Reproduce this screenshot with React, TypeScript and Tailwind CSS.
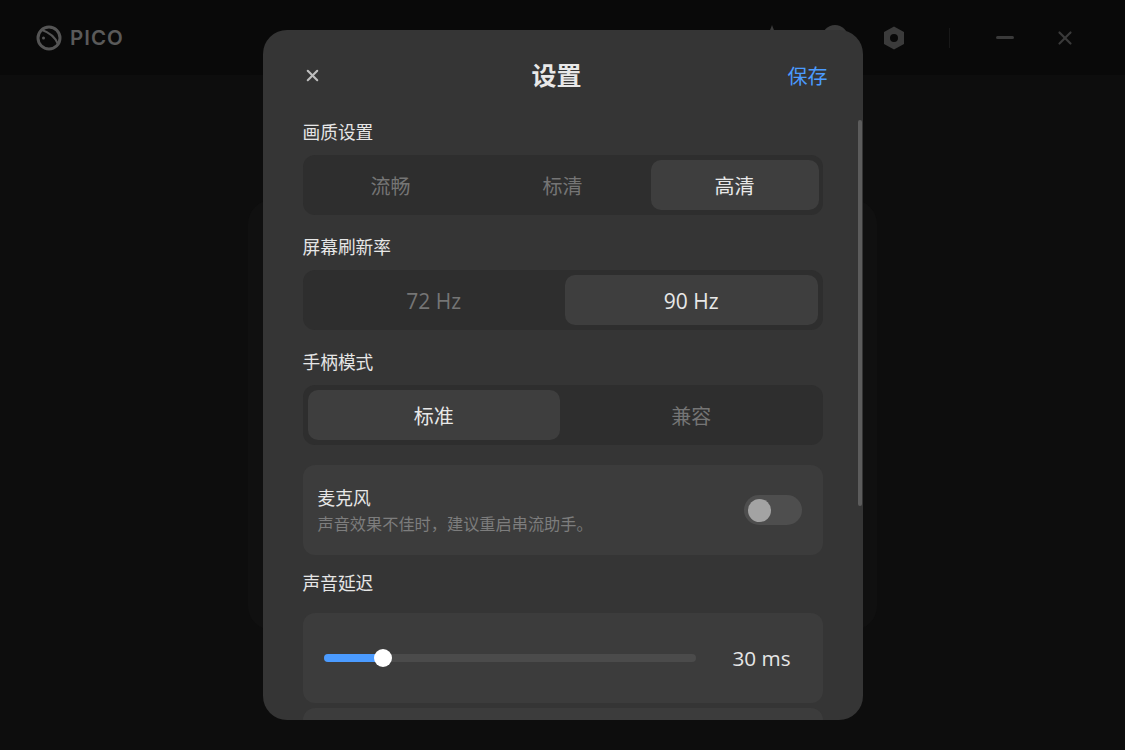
import { X } from "lucide-react";

const font = "font-['Open_Sans','Noto_Sans_CJK_SC',sans-serif]";

function Label({ text, className = "" }: { text: string; className?: string }) {
  return (
    <div className={`h-[26px] text-[17.7px] leading-[26px] text-[#e6e6e6] ${className}`}>
      {text}
    </div>
  );
}

function Segmented({
  items,
  active,
  itemClass,
  boxClass,
}: {
  items: string[];
  active: number;
  itemClass: string;
  boxClass: string;
}) {
  return (
    <div className={`mt-[10px] flex h-[60px] rounded-xl bg-[#2e2e2e] py-[5px] ${boxClass}`}>
      {items.map((item, i) => (
        <div
          key={item}
          className={`flex h-[50px] items-center justify-center rounded-[10px] leading-[52px] ${itemClass} ${
            i === active ? "bg-[#3e3e3e] text-[#e8e8e8]" : "text-[#757575]"
          }`}
        >
          {item}
        </div>
      ))}
    </div>
  );
}

function Header() {
  return (
    <header className="flex h-[75px] items-center bg-[#090909] pl-[36px]">
      <svg width="26" height="26" viewBox="0 0 26 26" fill="none">
        <circle cx="13" cy="13" r="11" stroke="#555" strokeWidth="3" />
        <path d="M6 5 C12 7 19 12 22 19" stroke="#555" strokeWidth="2" />
        <circle cx="7.5" cy="13" r="1.5" fill="#555" />
      </svg>
      <span className="ml-[8px] pt-px font-['Inter',sans-serif] text-[20.5px] font-semibold tracking-[1px] text-[#5a5a5a]">
        PICO
      </span>
      <div className="ml-auto flex items-center pr-[49px]">
        <div className="h-0 w-0 border-x-[10px] border-b-[26px] border-x-transparent border-b-[#3a3a3a]" />
        <div className="ml-[40px] h-[26px] w-[26px] rounded-full bg-[#3a3a3a]" />
        <svg className="ml-[34px]" width="24" height="24" viewBox="0 0 24 24">
          <path
            fillRule="evenodd"
            d="M12 0.5 L22 6 V18 L12 23.5 L2 18 V6 Z M12 8 A4 4 0 1 0 12 16 A4 4 0 1 0 12 8 Z"
            fill="#3b3b3b"
          />
        </svg>
        <div className="ml-[43px] h-[20px] w-px bg-[#181818]" />
        <div className="ml-[46px] h-[2.5px] w-[18px] rounded-full bg-[#3a3a3a]" />
        <X className="ml-[40px] text-[#3a3a3a]" size={22} strokeWidth={2.4} />
      </div>
    </header>
  );
}

export default function App() {
  return (
    <div className={`relative h-[750px] w-[1125px] overflow-hidden bg-[#0d0d0d] ${font}`}>
      <Header />
      <main className="flex justify-center pt-[125px]">
        <div className="h-[430px] w-[629px] rounded-3xl bg-[#101010]" />
      </main>

      <div className="absolute inset-0 flex items-center justify-center">
        <div className="relative h-[690px] w-[600px] overflow-hidden rounded-3xl bg-[#353535]">
          <div className="absolute right-[1px] top-[90px] h-[386px] w-[4px] rounded-full bg-[#5c5c5c]" />

          <div className="px-10 pt-[26px]">
            <div className="-mr-[5px] flex h-[38px] items-center justify-between">
              <X className="text-[#bdbdbd]" size={19} strokeWidth={2.6} />
              <h1 className="ml-1 text-[25px] font-bold leading-[38px] text-[#e8e8e8]">设置</h1>
              <button className="pt-[3px] text-[20px] leading-[38px] text-[#4b9bff]">保存</button>
            </div>

            <div className="w-[520px]">
              <Label text="画质设置" className="mt-[25px]" />
              <Segmented
                items={["流畅", "标清", "高清"]}
                active={2}
                boxClass="gap-1 px-1"
                itemClass="w-[168px] pt-[3px] text-[20px]"
              />

              <Label text="屏幕刷新率" className="mt-[19px]" />
              <Segmented
                items={["72 Hz", "90 Hz"]}
                active={1}
                boxClass="gap-[5px] px-[5px]"
                itemClass="flex-1 pt-px text-[21px]"
              />

              <Label text="手柄模式" className="mt-[19px]" />
              <Segmented
                items={["标准", "兼容"]}
                active={0}
                boxClass="gap-[5px] px-[5px]"
                itemClass="flex-1 pt-[3px] text-[20px]"
              />

              <div className="mt-5 flex h-[90px] items-center justify-between rounded-xl bg-[#3c3c3c] pl-[15px] pr-[21px]">
                <div>
                  <div className="text-[17.7px] leading-[26px] text-[#e6e6e6]">麦克风</div>
                  <div className="pt-px text-[16.2px] leading-[24px] text-[#7d7d7d]">
                    声音效果不佳时，建议重启串流助手。
                  </div>
                </div>
                <div className="flex h-[30px] w-[58px] items-center rounded-full bg-[#4e4e4e] pl-1">
                  <div className="h-[23px] w-[23px] rounded-full bg-[#a3a3a3]" />
                </div>
              </div>

              <Label text="声音延迟" className="mt-[15px]" />
              <div className="mt-[17px] flex h-[90px] items-center rounded-xl bg-[#3c3c3c] pl-[21px]">
                <div className="relative h-2 w-[372px] rounded-full bg-[#4b4b4b]">
                  <div className="h-2 w-[59px] rounded-full bg-[#4b9bff]" />
                  <div className="absolute left-[50px] top-[-5px] h-[18px] w-[18px] rounded-full bg-white" />
                </div>
                <span className="ml-[37px] text-[20.7px] leading-[26px] text-[#e6e6e6]">30 ms</span>
              </div>
              <div className="mt-[5px] h-[90px] rounded-xl bg-[#3c3c3c]" />
            </div>
          </div>
        </div>
      </div>
    </div>
  );
}
